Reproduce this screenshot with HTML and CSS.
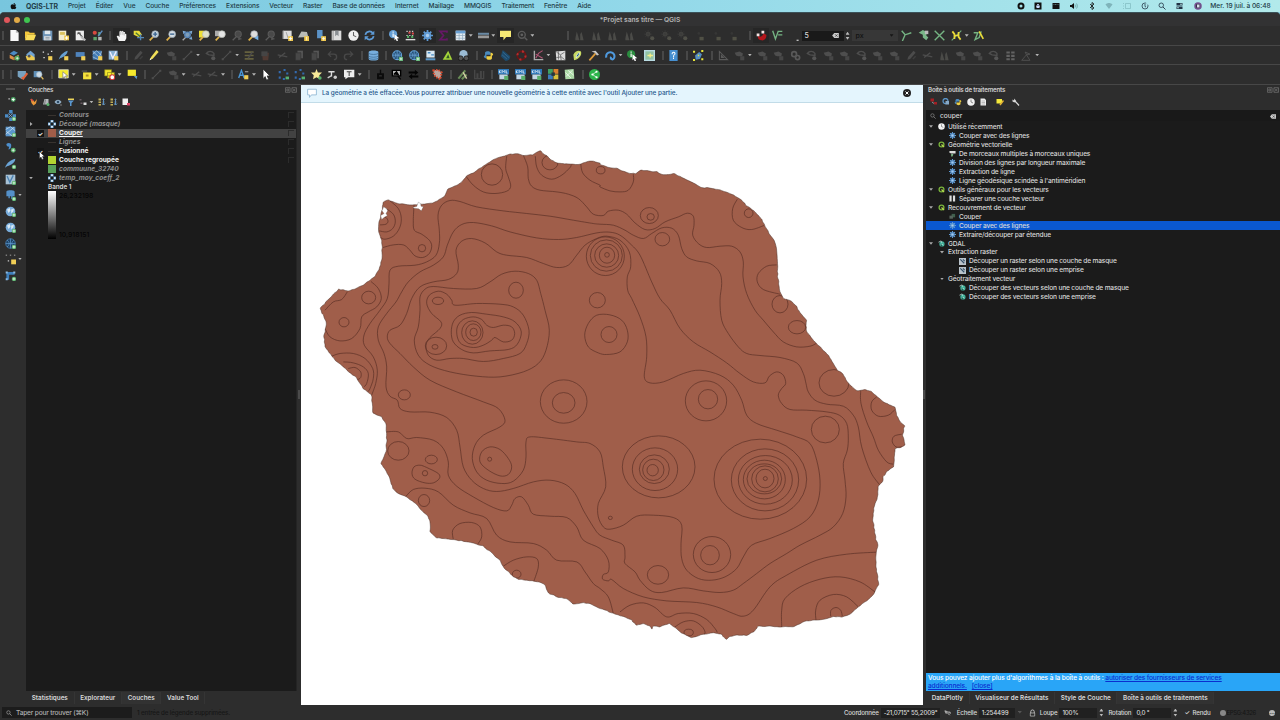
FILE: index.html
```
<!DOCTYPE html>
<html lang="fr">
  <head>
    <meta charset="UTF-8" />
    <title>*Projet sans titre — QGIS</title>
    <link rel="stylesheet" href="styles.css">
  </head>
  <body>
    <!-- icon sprite -->
    <svg class="sprite">
      <symbol id="apple" viewBox="0 0 16 16"><path d="M11 1c0 2-1 3-3 3 0-2 1-3 3-3zM8 5c1 0 2-1 3-1 1.500 0 2.500.8 3 1.600-2.500 1.500-2 4.500.5 5.500C13.500 14 12 15.500 11 15.500c-1 0-1.500-.5-2.700-.5s-1.800.5-2.800.5C3.500 15.500 1.500 12 1.500 9S3.500 4 5.500 4C6.500 4 7.500 5 8 5z"/></symbol>
      <symbol id="new" viewBox="0 0 16 16"><path d="M2 0h8l4 4v12H2z" fill="#f8f8f8"/><path d="M10 0v4h4" fill="#bbb"/></symbol>
      <symbol id="open" viewBox="0 0 16 16"><path d="M0 14V2h5l2 2h7v3H4z" fill="#f3c73c"/><path d="M3 7h13l-3 8H0z" fill="#f9dd5a"/></symbol>
      <symbol id="save" viewBox="0 0 16 16"><path d="M1 1h14v14H1z" fill="#6f95b8"/><path d="M4 1h8v5H4z" fill="#dfe8ee"/><path d="M3 9h10v6H3z" fill="#d9dde0"/><path d="M5 11h6M5 13h6" stroke="#7c8b98"/></symbol>
      <symbol id="layout" viewBox="0 0 16 16"><path d="M1 1h11v14H1z" fill="#f2ecd0"/><path d="M3 3h7v4H3z" fill="#d9c15c"/><path d="M9 8h7v7H9z" fill="#edc94f"/><path d="M12.500 9v5M10 11.500h5" stroke="#fff" stroke-width="1.500"/></symbol>
      <symbol id="layouts" viewBox="0 0 16 16"><path d="M1 1h12v14H1z" fill="#eee"/><path d="M4 3l7 7M3 6l4-2 2 5" stroke="#555" stroke-width="1.500" fill="none"/><path d="M9 10l6 5" stroke="#bbb" stroke-width="3"/></symbol>
      <symbol id="style" viewBox="0 0 16 16"><circle cx="4" cy="4" r="3" fill="#d84a3f"/><path d="M9 3h3v5H9zM2 10h5v5H2z" fill="#5fa46a"/><path d="M15 1L9 9" stroke="#5f91c5" stroke-width="2"/><path d="M9 10h5v5H9z" fill="#b7b7b7"/></symbol>
      <symbol id="hand" viewBox="0 0 16 16"><path d="M4 16L1 9l2-1 2 2V2l2-1 1 1 2-1 1 2 2 0v2l2 1v6l-2 4z" fill="#f4f4f4"/><path d="M7 2v5M10 2v5M12 4v4" stroke="#888" stroke-width=".7"/></symbol>
      <symbol id="pansel" viewBox="0 0 16 16"><path d="M1 1h8l4 6-5 3-7-3z" fill="#e8dc3a"/><path d="M11 6v9M6 11h10" stroke="#5688b8" stroke-width="2"/><path d="M4 4l6 5" stroke="#4f7a33" stroke-width="2"/></symbol>
      <symbol id="zin" viewBox="0 0 16 16"><path d="M1 15l5-5" stroke="#e0b34a" stroke-width="2.500"/><circle cx="9" cy="6" r="5" fill="#c9d5de" stroke="#93a3b0"/><path d="M9 3v6M6 6h6" stroke="#3b6591" stroke-width="2"/></symbol>
      <symbol id="zout" viewBox="0 0 16 16"><path d="M1 15l5-5" stroke="#e0b34a" stroke-width="2.500"/><circle cx="9" cy="6" r="5" fill="#d5dde3" stroke="#93a3b0"/><path d="M6 6h6" stroke="#3b6591" stroke-width="2"/></symbol>
      <symbol id="zfull" viewBox="0 0 16 16"><path d="M1 1l5 1-4 4zM15 1l-5 1 4 4zM15 14l-5-1 4-4z" fill="#7da9d3"/><path d="M1 15l5-5" stroke="#aaa" stroke-width="2"/><circle cx="8" cy="7" r="4" fill="#7e9db8" stroke="#5482b5" stroke-width="2"/></symbol>
      <symbol id="zsel" viewBox="0 0 16 16"><path d="M0 1h8v10H0z" fill="#eedf35"/><path d="M1 15l5-5" stroke="#e0b34a" stroke-width="2.500"/><circle cx="10" cy="6" r="5" fill="#dfe0c9" stroke="#b5b9b0"/></symbol>
      <symbol id="zlay" viewBox="0 0 16 16"><path d="M0 1h7v8H0z" fill="#aaa"/><path d="M1 15l5-5" stroke="#e0b34a" stroke-width="2.500"/><circle cx="10" cy="6" r="5" fill="#e5e5e5" stroke="#b5b9b0"/></symbol>
      <symbol id="zlast" viewBox="0 0 16 16"><path d="M1 15l5-5" stroke="#e0b34a" stroke-width="2.500"/><circle cx="9" cy="6" r="5" fill="#ddd" stroke="#a5a9b0"/><path d="M15 8v7l-6-3.500z" fill="#75b0e5"/></symbol>
      <symbol id="dzoom" viewBox="0 0 16 16"><path d="M1 15l5-5" stroke="#5c5c5c" stroke-width="2"/><circle cx="9" cy="6" r="4.500" fill="#494949" stroke="#5a5a5a" stroke-width="1.500"/><path d="M9 10l6 3-6 2z" fill="#555"/></symbol>
      <symbol id="mapnew" viewBox="0 0 16 16"><path d="M1 1h13v12H1z" fill="#ddd"/><path d="M2 1v12M6 3l3 9" stroke="#888"/><path d="M9 9h7v7H9z" fill="#f0c84c"/><path d="M12.500 10v5M10 12.500h5" stroke="#fff" stroke-width="1.300"/></symbol>
      <symbol id="map3d" viewBox="0 0 16 16"><path d="M0 11L5 2l8 1 2 7z" fill="#b9bbb6"/><path d="M9 9h7v7H9z" fill="#f0c84c"/><path d="M12.500 10v5" stroke="#fff"/></symbol>
      <symbol id="bmadd" viewBox="0 0 16 16"><path d="M3 0h8v12H3z" fill="#5b92c6"/><path d="M9 9h7v7H9z" fill="#f0c84c"/><path d="M12.500 10v5M10 12.500h5" stroke="#fff"/></symbol>
      <symbol id="bm" viewBox="0 0 16 16"><path d="M1 1h14v14H1z" fill="#ddd"/><path d="M6 1h5v8L8.500 7 6 9z" fill="#8a8f93"/><path d="M3 1v14" stroke="#777"/></symbol>
      <symbol id="clock" viewBox="0 0 16 16"><circle cx="8" cy="8" r="7.500" fill="#f2f2f2"/><path d="M8 3v5l4 2" fill="none" stroke="#666" stroke-width="1.500"/></symbol>
      <symbol id="refresh" viewBox="0 0 16 16"><path d="M2 7a6 6 0 0 1 11-2M14 9a6 6 0 0 1-11 2" fill="none" stroke="#5d9ad5" stroke-width="2.500"/><path d="M15 1v6H9zM1 15V9h6z" fill="#5d9ad5"/></symbol>
      <symbol id="info" viewBox="0 0 16 16"><circle cx="6" cy="6" r="6" fill="#659fd5"/><path d="M6 5v5M6 2v2" stroke="#fff" stroke-width="1.700"/><path d="M8 6l7 6-3 0 1 4-2 0-1-3-2 2z" fill="#fff"/></symbol>
      <symbol id="infog" viewBox="0 0 16 16"><circle cx="6" cy="6" r="6" fill="#2a8c3f"/><path d="M6 5v5M6 2v2" stroke="#fff" stroke-width="1.700"/><path d="M8 6l7 6-3 0 1 4-2 0-1-3-2 2z" fill="#fff"/></symbol>
      <symbol id="stats" viewBox="0 0 16 16"><path d="M1 14h14" stroke="#ddd" stroke-width="2"/><path d="M2 2h12M2 8h12" stroke="#c9c9c9" stroke-width="1.500" stroke-dasharray="2 2"/><path d="M5 4h3M10 5h3" stroke="#d64848" stroke-width="3"/><path d="M3 10h3M9 10h3" stroke="#50ad60" stroke-width="3"/></symbol>
      <symbol id="gear" viewBox="0 0 16 16"><path d="M8 0v3M8 13v3M0 8h3M13 8h3M2.500 2.500l2 2M11.500 11.500l2 2M13.500 2.500l-2 2M4.500 11.500l-2 2" stroke="#5f9ad4" stroke-width="2.500"/><circle cx="8" cy="8" r="4" fill="#a9caea" stroke="#5f9ad4" stroke-width="3"/></symbol>
      <symbol id="sigma" viewBox="0 0 16 16"><path d="M13 4V2H3l5 6-5 6h10v-2" fill="none" stroke="#661866" stroke-width="2.500"/></symbol>
      <symbol id="table" viewBox="0 0 16 16"><path d="M1 1h14v14H1z" fill="#e4ecf2"/><path d="M1 1h14v4H1z" fill="#6aa0d2"/><path d="M1 8h14M1 12h14M6 5v10M11 5v10" stroke="#8fa9bd"/></symbol>
      <symbol id="ruler" viewBox="0 0 16 16"><path d="M0 4h16v3H0z" fill="#6a89a3"/><path d="M0 8h16v4H0z" fill="#999"/></symbol>
      <symbol id="tip" viewBox="0 0 16 16"><path d="M0 1h16v9H9l-4 5v-5H0z" fill="#f7ea74"/></symbol>
      <symbol id="dmag" viewBox="0 0 16 16"><circle cx="7" cy="7" r="5" fill="none" stroke="#5a5a5a" stroke-width="2"/><circle cx="7" cy="7" r="2" fill="#606060"/><path d="M11 11l4 4" stroke="#5a5a5a" stroke-width="2"/></symbol>
      <symbol id="dhist" viewBox="0 0 16 16"><path d="M2 15V12L4 2l3 10 1 3zM9 15V6l2-3 3 12z" fill="#4b4b48"/></symbol>
      <symbol id="dsun" viewBox="0 0 16 16"><circle cx="6" cy="6" r="3.500" fill="#444440"/><path d="M6 0v12M0 6h12M2 2l8 8M10 2l-8 8" stroke="#3c3c3a"/><circle cx="12" cy="12" r="3" fill="#505048"/></symbol>
      <symbol id="ddot" viewBox="0 0 16 16"><path d="M8 10h6v5H8z" fill="#505045"/><circle cx="7" cy="5" r="2" fill="#363635"/></symbol>
      <symbol id="dline" viewBox="0 0 16 16"><path d="M2 14L14 2" stroke="#505050" stroke-width="1.500"/><path d="M1 12h3v3H1zM12 1h3v3h-3z" fill="#4c4c4c"/></symbol>
      <symbol id="dpen" viewBox="0 0 16 16"><path d="M2 14L3 10 11 1l3 3-8 9z" fill="#4b4b4b"/><path d="M10 13l4-4" stroke="#3f3f3f" stroke-width="2"/></symbol>
      <symbol id="pen" viewBox="0 0 16 16"><path d="M1 15L3 10 11 0l3 3-8 9z" fill="#f1df58"/><path d="M1 15l1-3 2 1z" fill="#fff"/></symbol>
      <symbol id="dpoly" viewBox="0 0 16 16"><path d="M1 4l7-2 5 3-1 4H6l-3-1z" fill="#4e4e4e"/><path d="M9 9h6v6H9z" fill="#464646"/></symbol>
      <symbol id="dpoly2" viewBox="0 0 16 16"><path d="M2 5c3-4 8-4 11 0v3L6 7z" fill="none" stroke="#4e4e4e" stroke-width="2"/><circle cx="12" cy="12" r="3" fill="#555"/></symbol>
      <symbol id="dcopy" viewBox="0 0 16 16"><path d="M5 1h8v11H5z" fill="#565656"/><path d="M2 4h8v11H2z" fill="#484848" stroke="#333"/></symbol>
      <symbol id="dcut" viewBox="0 0 16 16"><path d="M1 7l14 3M3 11l9-7" stroke="#4c4c4c" stroke-width="2"/></symbol>
      <symbol id="dgrid" viewBox="0 0 16 16"><path d="M2 2h5v3H2zM9 2h5v3H9zM2 7h5v3H2zM9 7h5v3H9zM2 12h5v3H2zM9 12h5v3H9z" fill="#626262"/></symbol>
      <symbol id="drot" viewBox="0 0 16 16"><path d="M1 15h12L8 7zM6 3l7 3-5 1z" fill="none" stroke="#555" stroke-width="1.200"/></symbol>
      <symbol id="dtri" viewBox="0 0 16 16"><path d="M2 2v12h12zM5 8v3h3z" fill="none" stroke="#5a5a5a" stroke-width="1.500"/></symbol>
      <symbol id="dgears" viewBox="0 0 16 16"><circle cx="6" cy="6" r="3.500" fill="none" stroke="#595959" stroke-width="2.500"/><circle cx="11" cy="11" r="3" fill="none" stroke="#595959" stroke-width="2.500"/></symbol>
      <symbol id="dtab" viewBox="0 0 16 16"><path d="M1 3h13M1 8h13M1 13h13" stroke="#65613f" stroke-width="2.500"/><path d="M12 3l-6 9" stroke="#4c4c4c" stroke-width="2"/></symbol>
      <symbol id="dtrash" viewBox="0 0 16 16"><path d="M3 4h10l-1 11H4z" fill="#503a33"/><path d="M2 2h9v7H2z" fill="#454545"/></symbol>
      <symbol id="undo" viewBox="0 0 16 16"><path d="M3 6h7a4 4 0 0 1 0 8M6 2L2 6l4 4" fill="none" stroke="#484848" stroke-width="2"/></symbol>
      <symbol id="redo" viewBox="0 0 16 16"><path d="M13 6H6a4 4 0 0 0 0 8M10 2l4 4-4 4" fill="none" stroke="#484848" stroke-width="2"/></symbol>
      <symbol id="magnet" viewBox="0 0 16 16"><path d="M3 8c2 3 6 2 8-3l4 2c1 5-3 9-7 8-4 0-6-3-5-7z" fill="#b3161b"/><path d="M1 5h4v4H1zM8 1h4v4H8z" fill="#f4e4e4"/></symbol>
      <symbol id="topo" viewBox="0 0 16 16"><path d="M1 1l4 12L9 2M8 2h7M9 7h6" fill="none" stroke="#75b483" stroke-width="2"/></symbol>
      <symbol id="dots" viewBox="0 0 16 16"><path d="M11 14h3v2h-3z" fill="#bbb"/></symbol>
      <symbol id="ylines" viewBox="0 0 16 16"><path d="M1 1l5 6L15 4M6 7L2 16" fill="none" stroke="#75b483" stroke-width="2"/></symbol>
      <symbol id="blob" viewBox="0 0 16 16"><path d="M1 4l6-4 6 3-1 5 3 3-3 4-5-4V7z" fill="#79b688"/><path d="M10 1h5v5h-5z" fill="#bbb"/></symbol>
      <symbol id="cross" viewBox="0 0 16 16"><path d="M1 1l14 14M15 1L1 15" stroke="#75b483" stroke-width="2"/></symbol>
      <symbol id="crossy" viewBox="0 0 16 16"><path d="M1 15L15 1" stroke="#75b483" stroke-width="1.500"/><path d="M2 2l3 4v7M14 14l-3-4V3M5 8h7" fill="none" stroke="#eadb38" stroke-width="2.500"/></symbol>
      <symbol id="wave" viewBox="0 0 16 16"><path d="M1 4l6 0-4 10 6-3 3-9" fill="none" stroke="#75b483" stroke-width="2"/><path d="M9 2l6 11" stroke="#eadb38" stroke-width="2.500"/></symbol>
      <symbol id="dsm" viewBox="0 0 16 16"><path d="M1 5l6-4 6 3-6 4z" fill="#4d8bc4"/><path d="M1 7l6 3v5l-6-3z" fill="#dd9149"/><path d="M8 10l6-3v5l-6 3z" fill="#e5bf54"/><circle cx="12" cy="12" r="3.500" fill="#4da75b"/><path d="M12 10v4M10 12h4" stroke="#fff"/></symbol>
      <symbol id="gpkg" viewBox="0 0 16 16"><path d="M2 6l6-5 6 5v8H3z" fill="#71a3d2"/><path d="M1 9l7-2 6 4v4H3z" fill="#ecc94f"/><circle cx="6" cy="9" r="2" fill="#555"/></symbol>
      <symbol id="pts" viewBox="0 0 16 16"><path d="M1 2h2v2H1zM8 5h2v2H8zM13 1h2v2h-2zM2 10h2v2H2z" fill="#ddd"/><path d="M9 9h6v6H9z" fill="#f0ce56"/></symbol>
      <symbol id="feather" viewBox="0 0 16 16"><path d="M1 14C3 7 8 3 14 1c0 5-5 9-11 11z" fill="#669fd2"/><path d="M9 9h6v6H9z" fill="#f0ce56"/></symbol>
      <symbol id="scratch" viewBox="0 0 16 16"><path d="M1 3h13v7H1z" fill="#4f83bb"/><path d="M9 9h6v6H9z" fill="#f0ce56"/></symbol>
      <symbol id="mesh" viewBox="0 0 16 16"><path d="M1 1h13v13H1z" fill="#427ab2"/><path d="M1 6l6-5 7 7M1 10l8 4 5-12M1 2l10 9" stroke="#bcd5eb" fill="none"/><path d="M9 9h6v6H9z" fill="#f0ce56"/></symbol>
      <symbol id="virt" viewBox="0 0 16 16"><path d="M1 1h13v13H1z" fill="#8ab2d6"/><path d="M3 3l4 9 5-10" stroke="#eef" stroke-width="2" fill="none"/><path d="M9 9h6v6H9z" fill="#f0ce56"/></symbol>
      <symbol id="db" viewBox="0 0 16 16"><path d="M1 3c0-3 14-3 14 0v10c0 3-14 3-14 0z" fill="#77aede"/><path d="M1 5c3 2 11 2 14 0M1 9c3 2 11 2 14 0M1 12c3 2 11 2 14 0" fill="none" stroke="#39668e"/></symbol>
      <symbol id="globe" viewBox="0 0 16 16"><circle cx="7.500" cy="7.500" r="6.500" fill="#244f76" stroke="#609fd4" stroke-width="1.500"/><path d="M1 7.500h13M7.500 1v13M3 3c3 3 3 6 0 9M12 3c-3 3-3 6 0 9" stroke="#73aee0" fill="none"/><path d="M10 10h6v6h-6z" fill="#61b576"/><path d="M13 11v4M11 13h4" stroke="#fff"/></symbol>
      <symbol id="osm" viewBox="0 0 16 16"><path d="M2 1h12v10H2z" fill="#d9e8f3"/><path d="M4 4h4M9 7h4" stroke="#488cc5" stroke-width="2"/><path d="M1 12h14v3H1z" fill="#5d98c9"/></symbol>
      <symbol id="tri" viewBox="0 0 16 16"><path d="M1 14L9 1l6 13z" fill="#a4d43a"/><path d="M6 12l3-6 2 6z" fill="#315a26"/></symbol>
      <symbol id="binoc" viewBox="0 0 16 16"><circle cx="8" cy="6" r="6" fill="#9bbbd4"/><circle cx="4" cy="12" r="3.500" fill="#555" stroke="#111"/><circle cx="12" cy="12" r="3.500" fill="#555" stroke="#111"/></symbol>
      <symbol id="py" viewBox="0 0 16 16"><path d="M3 8V4c0-3 8-3 8 0v3H5v5C1 12 0 8 3 8z" fill="#4b8bbe"/><path d="M13 8v4c0 3-8 3-8 0V9h6V4c4 0 5 4 2 4z" fill="#f0cf43"/></symbol>
      <symbol id="drop" viewBox="0 0 16 16"><path d="M4 0l11 9c0 4-3 7-7 7L1 9z" fill="#1d4a6b"/><path d="M4 3l9 8M3 7l7 6" stroke="#3d729b"/></symbol>
      <symbol id="ring" viewBox="0 0 16 16"><circle cx="8" cy="8" r="6" fill="none" stroke="#6e1414" stroke-width="2.500"/><circle cx="8" cy="8" r="6" fill="none" stroke="#b22d2d" stroke-width="3" stroke-dasharray="3 6.400"/></symbol>
      <symbol id="profile" viewBox="0 0 16 16"><path d="M2 1v13h13" fill="none" stroke="#ababab" stroke-width="2"/><path d="M4 12l4-7 6-4M4 6l10 6" stroke="#b45676" stroke-width="1.500" fill="none"/></symbol>
      <symbol id="grass" viewBox="0 0 16 16"><path d="M1 2l14-1v14H2z" fill="#ddd"/><path d="M2 3l6 4 1 8M8 7l6-4M2 11l7-1 5 4M5 2v12" stroke="#555" fill="none"/></symbol>
      <symbol id="leaf" viewBox="0 0 16 16"><path d="M3 15L2 7C4 1 10 0 13 2c2 5-3 11-10 13z" fill="#c9da64"/><path d="M6 11c0-4 3-7 5-7 0 3-2 6-5 7z" fill="#1c5f78" stroke="#fff"/></symbol>
      <symbol id="hammer" viewBox="0 0 16 16"><path d="M2 15L11 5" stroke="#de9c3c" stroke-width="2.500"/><path d="M5 2l6-1 5 6-3 1-3-4z" fill="#c9c9c9"/></symbol>
      <symbol id="swirl" viewBox="0 0 16 16"><path d="M2 11a6 6 0 1 1 11 1c-2 3-6 1-4-2" fill="none" stroke="#4f9ade" stroke-width="3"/></symbol>
      <symbol id="pic" viewBox="0 0 16 16"><path d="M0 0h16v16H0z" fill="#b9dbe3"/><path d="M2 2h12v12H2z" fill="#93c3a4"/><path d="M5 8h8M9 5v6" stroke="#f5ee88" stroke-width="2"/></symbol>
      <symbol id="help" viewBox="0 0 16 16"><path d="M2 0h12v16H2z" fill="#468fd0"/><path d="M6 6c0-4 5-3 4 0-2 1-2 2-2 4M8 11v2" fill="none" stroke="#fff" stroke-width="1.500"/></symbol>
      <symbol id="georef" viewBox="0 0 16 16"><path d="M3 8l6-5 4 3-3 7-6 1z" fill="#538fc3"/><path d="M0 1h3v3H0zM12 0h3v3h-3zM0 13h3v3H0zM12 12h3v3h-3zM7 7h2v2H7z" fill="#e5e43b"/></symbol>
      <symbol id="wfs" viewBox="0 0 16 16"><path d="M1 3h12v8l-6 4-6-4z" fill="#78a2c0"/><path d="M7 12l2 2 6-8" fill="none" stroke="#e0623b" stroke-width="3"/></symbol>
      <symbol id="msearch" viewBox="0 0 16 16"><path d="M1 3h11v9H1z" fill="#5f8fb8"/><circle cx="9" cy="8" r="4" fill="#cfdce6" stroke="#a2b8c9"/><path d="M12 11l3 4" stroke="#dbb55a" stroke-width="2"/></symbol>
      <symbol id="selrect" viewBox="0 0 16 16"><path d="M1 1h14v12H1z" fill="#f5eb2d" stroke="#ddd"/><path d="M7 4l7 6-3 0 1 4-2 0-1-3-2 2z" fill="#fff" stroke="#777"/></symbol>
      <symbol id="selval" viewBox="0 0 16 16"><path d="M3 5h12v10H3z" fill="#f5e13c"/><path d="M7 8h4v3H7z" fill="#a98c26"/><path d="M1 3h8" stroke="#777"/></symbol>
      <symbol id="desel" viewBox="0 0 16 16"><path d="M1 1h10v9H1zM5 5h10v8H5z" fill="#f5e92d" stroke="#86811f"/><circle cx="12" cy="12" r="3.500" fill="#fff" stroke="#d33333" stroke-width="1.500"/></symbol>
      <symbol id="selloc" viewBox="0 0 16 16"><path d="M1 1h12v9H1z" fill="#f5e92d"/><path d="M10 10l4 5 1-5z" fill="#5b99cc"/></symbol>
      <symbol id="label" viewBox="0 0 16 16"><path d="M1 13L5 2l4 11M3 9h5" fill="none" stroke="#4a96d5" stroke-width="2"/><path d="M9 9h6v6H9z" fill="#f0ce56"/><path d="M10 4h5" stroke="#aaa" stroke-width="1.500"/></symbol>
      <symbol id="cursor" viewBox="0 0 16 16"><path d="M3 0l10 10-4 0 2 5-3 1-2-5-3 3z" fill="#fff" stroke="#222"/></symbol>
      <symbol id="dotsb" viewBox="0 0 16 16"><path d="M1 3h3v3H1zM8 0h3v3H8zM12 5h3v3h-3zM1 11h3v3H1zM7 13h3v3H7z" fill="#336aae"/><path d="M11 11h5v4h-5z" fill="#56b173"/></symbol>
      <symbol id="star" viewBox="0 0 16 16"><path d="M8 0l2 5 6 0-4 4 1 6-5-3-5 3 1-6-4-4 6 0z" fill="#f8e998"/><circle cx="13" cy="13" r="2.500" fill="#59b36c"/></symbol>
      <symbol id="tstar" viewBox="0 0 16 16"><path d="M2 4h9M6.500 4v7" stroke="#ddd" stroke-width="2"/><path d="M1 13l5-3" stroke="#ccc" stroke-width="2"/><circle cx="12" cy="12" r="2.500" fill="#ccc"/></symbol>
      <symbol id="tbox" viewBox="0 0 16 16"><path d="M0 1h15v11H6l-4 3v-3H0z" fill="#eee"/><path d="M4 4h7M7.500 4v6" stroke="#444" stroke-width="1.500"/></symbol>
      <symbol id="blk1" viewBox="0 0 16 16"><path d="M3 6h10v9H3zM7 1h2v6H7z" fill="#0b0b0b"/><path d="M6 10h4" stroke="#555"/></symbol>
      <symbol id="blk2" viewBox="0 0 16 16"><path d="M2 2h12v8H2z" fill="#bbb" stroke="#000" stroke-width="2"/><path d="M4 8l4-4 3 5M10 10l4 5" stroke="#000" stroke-width="2"/></symbol>
      <symbol id="blk3" viewBox="0 0 16 16"><path d="M1 5h10M15 11H5" stroke="#050505" stroke-width="3"/><path d="M10 1l5 4-5 4zM6 7l-5 4 5 4z" fill="#050505"/></symbol>
      <symbol id="redpoly" viewBox="0 0 16 16"><path d="M2 2l7-1 5 4-1 5-1 5-4-2-5-4z" fill="#b9a69f"/><path d="M2 2l7-1 5 4-1 5-1 5-4-2-5-4z" fill="none" stroke="#d9482c" stroke-width="3" stroke-dasharray="2 2"/></symbol>
      <symbol id="brush" viewBox="0 0 16 16"><path d="M2 14L12 2M7 15l7-7" stroke="#698c57" stroke-width="3"/><path d="M9 5l5 9" stroke="#d6d2a8" stroke-width="2"/></symbol>
      <symbol id="dbar" viewBox="0 0 16 16"><path d="M1 1v13h13V3" fill="none" stroke="#464646" stroke-width="2"/><path d="M5 13V6M10 13V3" stroke="#464646" stroke-width="3"/></symbol>
      <symbol id="kml" viewBox="0 0 16 16"><path d="M0 0h16v8H0z" fill="#2c76b7"/><path d="M2 8h12v7H2z" fill="#c5d7e5"/><path d="M2 2v4M2 4l2-2M2 4l2 2M6 6V2l2 2 2-2v4M12 2v4h2" fill="none" stroke="#fff"/><path d="M9 10h6v6H9z" fill="#5bae6b"/></symbol>
      <symbol id="tiles" viewBox="0 0 16 16"><path d="M0 0h7v7H0z" fill="#3fa163"/><path d="M8 0h7v7H8z" fill="#d9812f"/><path d="M0 8h7v7H0z" fill="#3d7ebc"/><path d="M8 8h7v7H8z" fill="#d7c23b"/><path d="M5 5h5v5H5z" fill="#26363b"/></symbol>
      <symbol id="gmap" viewBox="0 0 16 16"><path d="M1 1l13-1 1 14-13 1z" fill="#acd8a6"/><path d="M2 5l8 8M6 2l8 7M3 11l9-9" stroke="#fff"/></symbol>
      <symbol id="share" viewBox="0 0 16 16"><circle cx="8" cy="8" r="8" fill="#2eb54c"/><path d="M11 4L5 8l6 4" fill="none" stroke="#fff"/><circle cx="11" cy="4" r="1.600" fill="#fff"/><circle cx="5" cy="8" r="1.600" fill="#fff"/><circle cx="11" cy="12" r="1.600" fill="#fff"/></symbol>
      <!-- side bar and panels -->
      <symbol id="vadd" viewBox="0 0 16 16"><path d="M5 6h2v2H5z" fill="#ccc"/><circle cx="12" cy="8" r="3.500" fill="#4da765"/><path d="M12 6v4M10 8h4" stroke="#fff" stroke-width="1.500"/></symbol>
      <symbol id="padd" viewBox="0 0 16 16"><path d="M6 0h5v5H6zM0 6h5v5H0zM11 6h5v5h-5zM6 11h5v5H6z" fill="#4a8cc8"/><path d="M5 5l6 6M11 5l-6 6" stroke="#8cb9df"/><circle cx="13" cy="13" r="3.200" fill="#59b36c"/><path d="M13 11v4M11 13h4" stroke="#fff"/></symbol>
      <symbol id="rgrp" viewBox="0 0 16 16"><path d="M5 0h6v5H5zM0 5h5v6H0zM11 5h5v6h-5zM5 11h6v5H5z" fill="#6aa7dc"/><path d="M6 1h4v3H6zM1 6h3v4H1zM12 6h3v4h-3zM6 12h4v3H6z" fill="#d7e8f6"/></symbol>
      <symbol id="madd" viewBox="0 0 16 16"><path d="M1 1h14v14H1z" fill="#5b97cd"/><path d="M1 5l7-4 7 6M1 12L13 2M2 8l9 7" stroke="#d9e8f4" fill="none"/><circle cx="13" cy="13" r="3.200" fill="#59b36c"/><path d="M13 11v4M11 13h4" stroke="#fff"/></symbol>
      <symbol id="nadd" viewBox="0 0 16 16"><path d="M1 1h14v14H1z" fill="#a9c3d6"/><path d="M3 3l4 9 5-10" stroke="#4d83b3" stroke-width="2" fill="none"/><circle cx="13" cy="13" r="3.200" fill="#59b36c"/><path d="M13 11v4M11 13h4" stroke="#fff"/></symbol>
      <symbol id="cadd" viewBox="0 0 16 16"><path d="M2 3c3-3 8-1 7 3 0 3-2 4-4 5l1-4C3 7 2 5 2 3z" fill="#4d8ecb"/><circle cx="12" cy="12" r="3.500" fill="#59b36c"/><path d="M12 10v4M10 12h4" stroke="#fff"/></symbol>
      <symbol id="fadd" viewBox="0 0 16 16"><path d="M0 14C3 6 8 3 15 1c0 5-5 9-12 11z" fill="#6ba4d6"/><circle cx="13" cy="13" r="3.200" fill="#59b36c"/><path d="M13 11v4M11 13h4" stroke="#fff"/></symbol>
      <symbol id="eadd" viewBox="0 0 16 16"><path d="M2 2c2-2 10-2 12 0v7h-3v4H9V9H7v3H5V9H2z" fill="#5490c8"/><circle cx="13" cy="13" r="3.200" fill="#59b36c"/><path d="M13 11v4M11 13h4" stroke="#fff"/></symbol>
      <symbol id="wadd" viewBox="0 0 16 16"><circle cx="8" cy="8" r="7" fill="#79addb"/><path d="M3 5l4-2 1 4-3 3zM9 5l4-1-1 4-3 3z" fill="#d9eaf6"/><circle cx="13" cy="13" r="3.200" fill="#59b36c"/><path d="M13 11v4M11 13h4" stroke="#fff"/></symbol>
      <symbol id="gadd" viewBox="0 0 16 16"><circle cx="8" cy="8" r="7" fill="#1e4265" stroke="#4f8abf"/><path d="M1 8h14M8 1v14M3 3c4 3 4 7 0 10M13 3c-4 3-4 7 0 10" stroke="#5f9bd0" fill="none"/><circle cx="13" cy="13" r="3.200" fill="#59b36c"/><path d="M13 11v4M11 13h4" stroke="#fff"/></symbol>
      <symbol id="yadd" viewBox="0 0 16 16"><path d="M1 1h2v1H1zM7 1h2v1H7zM13 1h2v1h-2zM4 9h2v2H4z" fill="#ccc"/><path d="M9 8h7v7H9z" fill="#f0ce56"/></symbol>
      <symbol id="shadd" viewBox="0 0 16 16"><path d="M2 14V3h12v4H6v7z" fill="#3e7fbb"/><path d="M1 2h3v3H1zM12 2h3v3h-3zM1 12h3v3H1z" fill="#8ab9e0"/><circle cx="13" cy="13" r="3.200" fill="#59b36c"/><path d="M13 11v4M11 13h4" stroke="#fff"/></symbol>
      <symbol id="fire" viewBox="0 0 16 16"><path d="M1 2l5 2 3 4 5-6-2 9-5 4-4-5z" fill="#e8983a"/><path d="M2 2l4 4" stroke="#d84444" stroke-width="3"/></symbol>
      <symbol id="grp" viewBox="0 0 16 16"><path d="M2 13L5 2h8v11z" fill="#b5b9bc"/><path d="M7 3l-2 10" stroke="#444"/><circle cx="12" cy="13" r="3" fill="#59b36c"/></symbol>
      <symbol id="eye" viewBox="0 0 16 16"><path d="M1 8c4-6 10-6 14 0-4 6-10 6-14 0z" fill="#93afc6"/><circle cx="8" cy="8" r="2.500" fill="#2f4c66"/><path d="M13 13h2v2h-2z" fill="#ccc"/></symbol>
      <symbol id="filter" viewBox="0 0 16 16"><path d="M2 1h12v3H2z" fill="#ecd55b"/><path d="M2 5h12L9 10v6H6v-6z" fill="#5a97cf"/></symbol>
      <symbol id="legend" viewBox="0 0 16 16"><path d="M1 2h4v3H1zM3 9h4v3H3z" fill="#6a5b63"/><path d="M9 9h6v5H9z" fill="#ddd"/></symbol>
      <symbol id="tree" viewBox="0 0 16 16"><path d="M1 1h5v4H1zM1 7h5v3H1zM1 12h5v3H1z" fill="#c3b056"/><path d="M8 3h6M8 8h6M8 13h6" stroke="#888"/><path d="M11 1v13M9 11l2 3 3-3" fill="none" stroke="#5c92c0" stroke-width="2"/></symbol>
      <symbol id="rem" viewBox="0 0 16 16"><path d="M1 1h11v13H1z" fill="#f0f0f0"/><path d="M10 10h6v5h-6z" fill="#e04368"/></symbol>
      <symbol id="cubes" viewBox="0 0 16 16"><path d="M1 1h7v6H1zM8 8h6v5H8z" fill="#a32025"/><path d="M4 8l4 3" stroke="#8d9194" stroke-width="2"/></symbol>
      <symbol id="model" viewBox="0 0 16 16"><circle cx="7" cy="6" r="5" fill="none" stroke="#5a94c7" stroke-width="2.500"/><path d="M7 6h7v7H7z" fill="#87a9c7"/></symbol>
      <symbol id="doc" viewBox="0 0 16 16"><path d="M3 1h8l3 3v11H3z" fill="#eee"/><path d="M5 6h7M5 9h7M5 12h7" stroke="#888"/></symbol>
      <symbol id="note" viewBox="0 0 16 16"><path d="M1 2h11v9H1z" fill="#f3e83b"/><path d="M8 14l7-9" stroke="#e4b335" stroke-width="3"/></symbol>
      <symbol id="wrench" viewBox="0 0 16 16"><path d="M5 5l9 10" stroke="#ddd" stroke-width="2.500"/><path d="M1 3l3 2 1-4 3 5-3 3-4-2z" fill="#ddd"/></symbol>
      <symbol id="q" viewBox="0 0 16 16"><circle cx="8" cy="8" r="5.500" fill="none" stroke="#78b23a" stroke-width="3"/><path d="M8 8l6 6" stroke="#b8d84f" stroke-width="3"/></symbol>
      <symbol id="multi" viewBox="0 0 16 16"><path d="M1 2h14v6H5L1 6z" fill="#ddd"/><path d="M5 9h5l-2 6H5z" fill="#7cb888"/></symbol>
      <symbol id="split" viewBox="0 0 16 16"><path d="M1 1h5v14H1zM9 1h5v14H9z" fill="#ddd"/></symbol>
      <symbol id="clip" viewBox="0 0 16 16"><path d="M6 2h8v8H6z" fill="#3f5f4c"/><path d="M1 6h8v7H1z" fill="#56645c"/></symbol>
      <symbol id="gdal" viewBox="0 0 16 16"><circle cx="9" cy="9" r="6" fill="#3fae98"/><path d="M1 5l6-3 2 5M6 12c1-3 5-3 6 0" stroke="#d5f2ec" stroke-width="1.500" fill="none"/><path d="M6 10h3v5H6z" fill="#22564c"/></symbol>
      <symbol id="rclip" viewBox="0 0 16 16"><path d="M0 0h16v16H0z" fill="#b9c3cb"/><path d="M3 3l9 9M9 3l4 4" stroke="#33506b" stroke-width="2.500"/></symbol>
      <symbol id="mag" viewBox="0 0 16 16"><circle cx="6.500" cy="6.500" r="4.500" fill="none" stroke="currentColor" stroke-width="1.600"/><path d="M10 10l5 5" stroke="currentColor" stroke-width="1.800"/></symbol>
      <symbol id="clear" viewBox="0 0 16 12"><path d="M5 0h11v12H5L0 6z" fill="#ccc"/><path d="M7 3l6 6M13 3L7 9" stroke="#222" stroke-width="1.500"/></symbol>
      <symbol id="dock" viewBox="0 0 26 12"><path d="M1 1h10v10H1zM4 4h4v4H4zM15 1h10v10H15zM17 3l6 6M23 3l-6 6" fill="none" stroke="#777" stroke-width="1.500"/></symbol>
    </svg>

    <div class="menubar">
      <svg class="apple"><use href="#apple"/></svg>
      <b>QGIS-LTR</b><span>Projet</span><span>Éditer</span><span>Vue</span><span>Couche</span><span>Préférences</span><span>Extensions</span><span>Vecteur</span><span>Raster</span><span>Base de données</span><span>Internet</span><span>Maillage</span><span>MMQGIS</span><span>Traitement</span><span>Fenêtre</span><span>Aide</span>
      <div class="tray">
        <svg viewBox="0 0 16 16"><circle cx="8" cy="8" r="5" fill="none" stroke="#111" stroke-width="4"/></svg>
        <svg viewBox="0 0 16 16"><path d="M1 1h14v14H1z" fill="#111"/><path d="M8 4l3 5H5zM5 11h6" fill="none" stroke="#cdf" stroke-width="2"/></svg>
        <svg viewBox="0 0 16 16"><path d="M1 2h14v12H1z" fill="#111"/><path d="M3 5h10" stroke="#9cc" stroke-dasharray="2 1"/></svg>
        <svg viewBox="0 0 16 16"><path d="M0 6h3l5-4v12l-5-4H0z" fill="#111"/><path d="M10 5c1 2 1 4 0 6M13 3c2 3 2 7 0 10" fill="none" stroke="#699" stroke-width="1.500"/></svg>
        <svg viewBox="0 0 16 16"><path d="M4 4l8 8-4 3V1l4 3-8 8" fill="none" stroke="#111" stroke-width="1.600"/></svg>
        <svg viewBox="0 0 16 16"><path d="M1 5c4-4 10-4 14 0l-7 9z" fill="#7fb4ba"/></svg>
        <svg viewBox="0 0 16 16"><path d="M5 3h10v10H5zM0 3h2M0 8h2M0 13h2" fill="none" stroke="#82bcc2" stroke-width="1.500"/></svg>
        <svg viewBox="0 0 16 16"><circle cx="8" cy="8" r="6" fill="none" stroke="#234" stroke-width="1.500" stroke-dasharray="30 4"/><path d="M8 4v5l2 1" fill="none" stroke="#234" stroke-width="1.500"/></svg>
        <svg viewBox="0 0 16 16" class="dark"><use href="#mag"/></svg>
        <svg viewBox="0 0 16 16"><path d="M1 2h12v5H1zM1 9h12v5H1z" fill="#234"/><circle cx="10" cy="4.500" r="1.500" fill="#cff"/><circle cx="4" cy="11.500" r="1.500" fill="#cff"/></svg>
        <svg viewBox="0 0 16 16"><circle cx="8" cy="8" r="6" fill="#334" stroke="#74518f" stroke-width="3"/><path d="M6 5h5v6H6z" fill="#dde"/></svg>
        <span>Mer. 19 juil. à 06:48</span>
      </div>
    </div>

    <div class="window">
      <div class="titlebar"><i class="dot red"></i><i class="dot yellow"></i><i class="dot green"></i><span>*Projet sans titre — QGIS</span></div>

      <!-- "|" is a separator, "v" a drop-down arrow, "_" a blank gap, "." a small one -->
      <div class="toolbar" data-icons="| new open save layout layouts style | hand! pansel zin zout zfull zsel zlay dzoom zlast dzoom mapnew map3d bmadd bm clock refresh | info stats gear! sigma table v ruler v tip! dmag v _ | dhist dhist dhist dhist . dsun dsun dsun ddot ddot ddot . | magnet! topo dots">
        <div class="size"><span>5</span><svg><use href="#clear"/></svg></div>
        <div class="spin"></div>
        <div class="unit"><span>px</span><i class="arrow"></i></div>
      </div>
      <div class="toolbar" data-icons="| dsm gpkg pts feather scratch mesh virt | dpen pen dpoly dline v dpoly2 dline v dtab dtrash dcut dcopy dcopy undo redo | db | globe globe osm tri binoc | py drop ring profile v grass leaf hammer swirl v infog pic | help | georef | dtri dpoly v dpoly dpoly dgears dpoly2 dpoly dpoly dpoly2 dpoly dpoly dpen dcut dhist dpoly dpoly dpoly2 dgrid drot v"></div>
      <div class="toolbar third" data-icons="| | wfs msearch | selrect v selval v desel v selloc | dline dpoly v dcut dcut v | label v cursor dotsb dotsb star tstar tbox v | blk1 blk2 blk3 | redpoly | brush dbar | kml kml kml tiles gmap | share"></div>

      <div class="main">
        <div class="sidebar">
          <i class="grip"></i>
          <svg><use href="#vadd"/></svg><svg><use href="#padd"/></svg><svg><use href="#madd"/></svg><svg><use href="#cadd"/></svg><svg><use href="#fadd"/></svg><svg><use href="#nadd"/></svg>
          <div class="more"><svg><use href="#eadd"/></svg><i class="arrow"></i></div>
          <svg><use href="#wadd"/></svg><svg><use href="#wadd"/></svg><svg><use href="#gadd"/></svg>
          <div class="more"><svg><use href="#yadd"/></svg><i class="arrow"></i></div>
          <svg><use href="#shadd"/></svg>
        </div>

        <div class="dock layers">
          <div class="dock-title">Couches<svg><use href="#dock"/></svg></div>
          <div class="dock-tools" data-icons="fire grp eye filter legend v tree tree rem"></div>
          <div class="tree">
            <div class="layer off"><i class="tw"></i><i class="cb"></i><i class="line"></i><span>Contours</span><i class="ind"></i></div>
            <div class="layer off"><i class="tw closed"></i><i class="cb"></i><svg><use href="#rgrp"/></svg><span>Découpé (masque)</span><i class="ind"></i></div>
            <div class="layer current"><i class="tw"></i><i class="cb on">✓</i><i class="sw" style="background: #a05d49"></i><span>Couper</span><i class="ind"></i></div>
            <div class="layer off"><i class="tw"></i><i class="cb"></i><i class="line"></i><span>Lignes</span><i class="ind"></i></div>
            <div class="layer"><i class="tw"></i><i class="cb on">✓</i><i class="line"></i><span>Fusionné</span><i class="ind"></i></div>
            <div class="layer"><i class="tw"></i><i class="cb"></i><i class="sw" style="background: #b2d431"></i><span>Couche regroupée</span><i class="ind"></i></div>
            <div class="layer off"><i class="tw"></i><i class="cb"></i><i class="sw" style="background: #57a05b"></i><span>commuune_32740</span></div>
            <div class="layer off"><i class="tw opened"></i><i class="cb"></i><svg><use href="#rgrp"/></svg><span>temp_moy_coeff_2</span></div>
            <div class="band">Bande 1</div>
            <div class="ramp"><i></i><div><span>26,232198</span><span>10,918151</span></div></div>
            <svg class="pointer"><use href="#cursor"/></svg>
          </div>
          <div class="tabs"><span>Statistiques</span><span>Explorateur</span><span class="active">Couches</span><span>Value Tool</span></div>
        </div>

        <div class="split"></div>
        <div class="canvas">
          <div class="message">
            <svg class="bubble" viewBox="0 0 16 16"><path d="M1 2h14v9H7l-3 4v-4H1z" fill="#fff" stroke="#6b9fc4"/></svg>
            <span>La géométrie a été effacée.Vous pourrez attribuer une nouvelle géométrie à cette entité avec l'outil Ajouter une partie.</span>
            <svg class="close" viewBox="0 0 16 16"><circle cx="8" cy="8" r="8" fill="#222"/><path d="M5 5l6 6M11 5l-6 6" stroke="#fff" stroke-width="2"/></svg>
          </div>
          <svg id="map" viewBox="301 102.800 621 602"></svg>
        </div>
        <div class="split"></div>

        <div class="dock toolbox">
          <div class="dock-title">Boîte à outils de traitements<svg><use href="#dock"/></svg></div>
          <div class="dock-tools" data-icons="cubes model py clock doc . note . wrench"></div>
          <div class="search"><svg class="mag"><use href="#mag"/></svg><span>couper</span><svg class="clear"><use href="#clear"/></svg></div>
          <div class="tree">
            <div class="alg l0"><i class="tw opened"></i><svg><use href="#clock"/></svg>Utilisé récemment</div>
            <div class="alg l1"><svg><use href="#gear"/></svg>Couper avec des lignes</div>
            <div class="alg l0"><i class="tw opened"></i><svg><use href="#q"/></svg>Géométrie vectorielle</div>
            <div class="alg l1"><svg><use href="#multi"/></svg>De morceaux multiples à morceaux uniques</div>
            <div class="alg l1"><svg><use href="#gear"/></svg>Division des lignes par longueur maximale</div>
            <div class="alg l1"><svg><use href="#gear"/></svg>Extraction de ligne</div>
            <div class="alg l1"><svg><use href="#gear"/></svg>Ligne géodésique scindée à l'antiméridien</div>
            <div class="alg l0"><i class="tw opened"></i><svg><use href="#q"/></svg>Outils généraux pour les vecteurs</div>
            <div class="alg l1"><svg><use href="#split"/></svg>Séparer une couche vecteur</div>
            <div class="alg l0"><i class="tw opened"></i><svg><use href="#q"/></svg>Recouvrement de vecteur</div>
            <div class="alg l1"><svg><use href="#clip"/></svg>Couper</div>
            <div class="alg l1 selected"><svg><use href="#gear"/></svg>Couper avec des lignes</div>
            <div class="alg l1"><svg><use href="#gear"/></svg>Extraire/découper par étendue</div>
            <div class="alg l0"><i class="tw opened"></i><svg><use href="#gdal"/></svg>GDAL</div>
            <div class="alg group"><i class="tw opened"></i>Extraction raster</div>
            <div class="alg l2"><svg><use href="#rclip"/></svg>Découper un raster selon une couche de masque</div>
            <div class="alg l2"><svg><use href="#rclip"/></svg>Découper un raster selon une emprise</div>
            <div class="alg group"><i class="tw opened"></i>Géotraitement vecteur</div>
            <div class="alg l2"><svg><use href="#gdal"/></svg>Découper des vecteurs selon une couche de masque</div>
            <div class="alg l2"><svg><use href="#gdal"/></svg>Découper des vecteurs selon une emprise</div>
          </div>
          <div class="tip">Vous pouvez ajouter plus d'algorithmes à la boîte à outils : <a>autoriser des fournisseurs de services<br>additionnels.</a> &nbsp; <a>[close]</a></div>
          <div class="tabs"><span>DataPlotly</span><span>Visualiseur de Résultats</span><span>Style de Couche</span><span class="active">Boîte à outils de traitements</span></div>
        </div>
      </div>

      <div class="status">
        <div class="locator"><svg><use href="#mag"/></svg><span>Taper pour trouver (⌘K)</span></div>
        <span class="ghost">1 entrée de légende supprimées.</span>
        <div class="info">
          <span>Coordonnée</span><span class="field f-coord">-21,0715° 55,2009°</span>
          <svg class="ext" viewBox="0 0 16 16"><path d="M2 3l6 2-3 4zM7 7l6 6M9 6h5v4" fill="none" stroke="#ccc" stroke-width="2"/></svg>
          <span>Échelle</span><span class="field f-scale">1:254499</span><i class="arrow dim"></i>
          <svg class="lock" viewBox="0 0 16 16"><path d="M4 8V5a4 4 0 0 1 8 0v3" fill="none" stroke="#ccc" stroke-width="2"/><path d="M3 8h10v7H3z" fill="none" stroke="#ccc" stroke-width="1.500"/></svg>
          <span>Loupe</span><span class="field f-mag">100%</span><i class="spin"></i>
          <span class="w-rot">Rotation</span><span class="field f-rot">0,0 °</span><i class="spin"></i>
          <span class="w-render">✓&nbsp; Rendu</span>
          <i class="ball"></i><span class="ghost epsg">EPSG:4326</span><i class="ball last">…</i>
        </div>
      </div>
    </div>
    <script src="app.js"></script>
  </body>
</html>
```
FILE: styles.css
```
* {
  box-sizing: border-box;
}

body {
  margin: 0;
  width: 1280px;
  height: 720px;
  overflow: hidden;
  display: flex;
  flex-direction: column;
  background: #8fd3e4;
  color: #d8d8d8;
  font-family: Inter, "Liberation Sans", sans-serif;
  font-size: 7px;
  font-weight: 500;
  white-space: nowrap;
}

i {
  font-style: normal;
}

svg {
  display: block;
  flex: none;
}

.sprite {
  position: absolute;
  width: 0;
  height: 0;
}

/* macOS menu bar */
.menubar {
  flex: none;
  height: 12px;
  display: flex;
  align-items: center;
  gap: 10px;
  padding: 0 9.500px 0 10px;
  background: linear-gradient(90deg, #78c6de, #92d8e9 50%, #b2eaeb);
  color: #1f3d48;
  font-size: 6.600px;
  letter-spacing: -0.120px;
}
.menubar b {
  font-size: 6.900px;
  letter-spacing: -0.080px;
}
.apple {
  width: 7px;
  height: 8px;
  fill: #111;
  margin-right: -1px;
}
.tray {
  margin-left: auto;
  display: flex;
  align-items: center;
  gap: 9.700px;
}
.tray svg {
  width: 8px;
  height: 8px;
}
.tray .dark {
  color: #234;
}
.tray span {
  margin-left: -1px;
  letter-spacing: -0.060px;
}

.window {
  flex: 1;
  min-height: 0;
  display: flex;
  flex-direction: column;
  background: #2d2d2d;
  border-top: 1px solid #3b5158;
  border-radius: 4px 4px 0 0;
}
.titlebar {
  flex: none;
  height: 13px;
  display: flex;
  align-items: center;
  gap: 4px;
  padding-left: 4px;
  background: #323233;
  border-radius: 4px 4px 0 0;
}
.titlebar span {
  flex: 1;
  text-align: center;
  padding-right: 34px;
  font-weight: 600;
  font-size: 6.700px;
  color: #b5b5b5;
}
.dot {
  width: 6px;
  height: 6px;
  border-radius: 50%;
}
.red {
  background: #e0565b;
}
.yellow {
  background: #e2ab47;
}
.green {
  background: #3fc551;
}

/* toolbars, filled by app.js */
.toolbar {
  flex: none;
  height: 19.500px;
  display: flex;
  align-items: center;
  padding-top: 1px;
  border-bottom: 1px solid #474747;
}
.toolbar .sep:first-child {
  margin-left: -2px;
}
.btn {
  flex: none;
  width: 16.550px;
  height: 15px;
  display: flex;
  align-items: center;
  justify-content: center;
}
.btn svg {
  width: 11px;
  height: 11px;
}
.btn.checked {
  background: #262626;
}
.sep {
  flex: none;
  width: 8px;
  height: 9px;
  border-left: 2px solid #484848;
  position: relative;
  left: 4px;
}
.arrow {
  flex: none;
  width: 6px;
  height: 3px;
}
.third .arrow {
  width: 6.400px;
}
.arrow::before {
  content: "";
  display: block;
  width: 4px;
  height: 2.500px;
  background: #b5b5b5;
  clip-path: polygon(0 0, 100% 0, 50% 100%);
}
.gap {
  width: 27px;
}
.dotgap {
  width: 4px;
}
.size {
  width: 42px;
  height: 10px;
  margin-left: -1px;
  padding: 0 5px 0 3px;
  background: #191919;
  display: flex;
  align-items: center;
  justify-content: space-between;
}
.size svg {
  width: 7px;
  height: 5px;
}
.spin {
  width: 4px;
  height: 8px;
  margin: 0 2px;
  display: flex;
  flex-direction: column;
  justify-content: space-between;
}
.spin::before,
.spin::after {
  content: "";
  height: 3px;
  background: #bbb;
  clip-path: polygon(50% 0, 100% 100%, 0 100%);
}
.spin::after {
  clip-path: polygon(0 0, 100% 0, 50% 100%);
}
.unit {
  width: 46px;
  height: 11px;
  margin-right: 1px;
  padding: 0 2px 0 4px;
  background: #373737;
  color: #111;
  display: flex;
  align-items: center;
  justify-content: space-between;
}
.unit .arrow::before {
  background: #161616;
}

.main {
  flex: 1;
  min-height: 0;
  display: flex;
}
.sidebar {
  width: 26px;
  display: flex;
  flex-direction: column;
  align-items: center;
  padding: 3px 5px 0 0;
  gap: 5px;
}
.sidebar svg {
  width: 11px;
  height: 11px;
}
.more {
  position: relative;
}
.more .arrow {
  position: absolute;
  left: 13px;
  top: 4px;
}
.grip {
  width: 9px;
  height: 2px;
  margin-bottom: -1px;
  background: #505050;
}

.dock {
  display: flex;
  flex-direction: column;
}
.layers {
  width: 272px;
}
.toolbox {
  width: 354px;
}
.dock-title {
  height: 10px;
  display: flex;
  align-items: center;
  justify-content: space-between;
  padding: 0 1px 0 2px;
  font-size: 6.200px;
  font-weight: 600;
  letter-spacing: -0.200px;
  color: #cfcfcf;
}
.dock-title svg {
  width: 12px;
  height: 6px;
}
.dock-tools {
  height: 15.500px;
  display: flex;
  align-items: center;
  padding-left: 1.500px;
}
.dock-tools .btn {
  width: 12.400px;
}
.dock-tools .btn svg {
  width: 8px;
  height: 8px;
}
.tree {
  flex: 1;
  min-height: 0;
  background: #1b1b1b;
  position: relative;
}
.layers .tree {
  margin-right: 1px;
  border-right: 1px solid #242424;
  padding-top: 0.500px;
}

.layer {
  height: 9px;
  display: flex;
  align-items: center;
  color: #f2f2f2;
  font-weight: 700;
  padding-right: 2px;
}
.layer span {
  margin-left: 3px;
  font-size: 6.600px;
}
.layer.off span {
  color: #8e8e8e;
  font-style: italic;
}
.layer.current {
  background: #424242;
}
.layer.current span {
  text-decoration: underline;
}
.layer svg {
  width: 8px;
  height: 8px;
}
.tw {
  flex: none;
  width: 11px;
  padding-left: 3px;
}
.tw::before {
  content: "";
  display: block;
}
.tw.opened::before {
  width: 4px;
  height: 2.500px;
  background: #aaa;
  clip-path: polygon(0 0, 100% 0, 50% 100%);
}
.tw.closed::before {
  width: 2.500px;
  height: 4px;
  margin-left: 1px;
  background: #aaa;
  clip-path: polygon(0 0, 100% 50%, 0 100%);
}
.cb {
  width: 7px;
  height: 7px;
  margin-right: 4px;
  font-size: 6px;
  line-height: 7px;
  text-align: center;
}
.cb.on {
  background: #151515;
}
.sw {
  width: 8px;
  height: 8px;
}
.line {
  width: 8px;
  height: 1px;
  background: #38332f;
}
.ind {
  width: 6px;
  height: 6px;
  margin-left: auto;
  border: 1px solid #2c2c2c;
  border-right: 0;
  border-bottom: 0;
}
.band {
  height: 8px;
  padding-left: 22px;
  line-height: 8px;
  font-weight: 600;
  font-size: 6.300px;
}
.ramp {
  display: flex;
  padding-left: 22px;
  height: 48px;
}
.ramp i {
  width: 8px;
  background: linear-gradient(#fff, #000);
}
.ramp div {
  display: flex;
  flex-direction: column;
  justify-content: space-between;
  padding-left: 3px;
  font-size: 6.800px;
  color: #050505;
}
.pointer {
  position: absolute;
  left: 12px;
  top: 41px;
  width: 8px;
  height: 9px;
}

.tabs {
  flex: none;
  height: 14.500px;
  display: flex;
  align-items: center;
  padding-top: 1px;
  font-size: 6.300px;
  font-weight: 600;
}
.tabs span {
  height: 12px;
  line-height: 12px;
  padding: 0 5.700px;
  border-right: 1px solid #353535;
}
.tabs .active {
  background: #323232;
}

.split {
  width: 3px;
  display: flex;
  align-items: center;
}
.split::before {
  content: "";
  width: 2px;
  height: 9px;
  background: #4b4b4b;
}

/* map canvas */
.canvas {
  flex: 1;
  background: #fff;
}
.message {
  height: 18px;
  display: flex;
  align-items: center;
  padding: 0 12px 0 6px;
  background: #e4f5fd;
  border-bottom: 1px solid #c2dce8;
  color: #24558c;
  font-size: 6.400px;
  letter-spacing: -0.035px;
}
.bubble {
  width: 10px;
  height: 10px;
  margin-right: 5px;
}
.close {
  width: 8px;
  height: 8px;
  margin-left: auto;
}
#map {
  width: 621px;
  height: 602px;
}
.land {
  fill: #a05e4a;
  stroke: #4a3029;
  stroke-width: 0.500;
}
.iso {
  fill: none;
  stroke: #5c3126;
  stroke-width: 0.700;
}
.hole {
  fill: #fff;
  stroke: #555;
  stroke-width: 0.300;
}

.search {
  height: 11px;
  display: flex;
  align-items: center;
  padding: 1px 4px 0 4px;
  background: #191919;
  font-size: 6.600px;
}
.search .mag {
  width: 6px;
  height: 6px;
  margin-right: 4px;
  color: #999;
}
.search .clear {
  width: 6px;
  height: 5px;
  margin-left: auto;
}
.toolbox .tree {
  padding-top: 1px;
}
.alg {
  height: 9px;
  display: flex;
  align-items: center;
  font-size: 6.600px;
  letter-spacing: -0.160px;
}
.alg svg {
  width: 7px;
  height: 7px;
  margin: 0 3.500px 0 0.500px;
}
.l1 {
  padding-left: 22px;
}
.l2 {
  padding-left: 32px;
}
.group {
  height: 8.500px;
  padding-left: 11px;
}
.selected {
  background: #0a58d0;
}
.tip {
  height: 18px;
  padding: 1px 2px;
  line-height: 8px;
  background: #29a5f7;
  color: #fff;
  font-size: 6.600px;
  letter-spacing: -0.120px;
}
.tip a {
  color: #0a2fd0;
  text-decoration: underline;
}

.status {
  flex: none;
  height: 15px;
  display: flex;
  align-items: center;
  font-size: 6.200px;
  letter-spacing: -0.180px;
  padding-left: 2px;
}
.locator {
  width: 130px;
  height: 11px;
  padding-left: 4px;
  display: flex;
  align-items: center;
  background: #1c1c1c;
  color: #b0b0b0;
  font-size: 6.600px;
}
.locator svg {
  width: 6px;
  height: 6px;
  margin-right: 4px;
}
.ghost {
  margin-left: 5px;
  color: #161616;
  letter-spacing: -0.100px;
}
.info {
  margin-left: auto;
  display: flex;
  align-items: center;
}
.field {
  height: 10px;
  line-height: 10px;
  padding-left: 3px;
  background: #202020;
  margin-left: 2px;
}
.f-coord {
  width: 59px;
}
.f-scale {
  width: 36px;
}
.f-mag {
  width: 38px;
}
.f-rot {
  width: 38px;
}
.ext,
.lock {
  width: 7px;
  height: 8px;
}
.ext {
  margin: 0 6px 0 4px;
}
.lock {
  margin: 0 4px 0 5px;
}
.dim {
  margin-left: 3px;
  opacity: 0.3;
}
.w-rot {
  margin-left: 3px;
}
.w-render {
  margin: 0 9px 0 5px;
}
.ball {
  width: 6px;
  height: 6px;
  border-radius: 50%;
  background: #888;
}
.ball.last {
  margin: 0 5px 0 13px;
  background: #bbb;
  color: #222;
  line-height: 3px;
  text-align: center;
}
.epsg {
  margin-left: 1px;
  font-size: 5.800px;
  letter-spacing: -0.250px;
}
```
FILE: app.js
```
// toolbars
document.querySelectorAll("[data-icons]").forEach((bar) => {
  const make = (name) => {
    if (name === "|") return '<i class="sep"></i>';
    if (name === "v") return '<i class="arrow"></i>';
    if (name === "_") return '<i class="gap"></i>';
    if (name === ".") return '<i class="dotgap"></i>';
    const on = name.endsWith("!");
    const id = name.replace("!", "");
    return `<span class="btn${on ? " checked" : ""}"><svg><use href="#${id}"/></svg></span>`;
  };
  bar.insertAdjacentHTML(
    "afterbegin",
    bar.dataset.icons.split(" ").map(make).join("")
  );
});
document
  .querySelector(".toolbar")
  .insertAdjacentHTML(
    "beforeend",
    ["ylines", "blob", "cross", "crossy", "v", "wave"]
      .map((n) =>
        n === "v"
          ? '<i class="arrow"></i>'
          : `<span class="btn"><svg><use href="#${n}"/></svg></span>`
      )
      .join("")
  );

// the island is digitised on four sheets, three units per pixel
const sheets = { A: [310, 140], B: [600, 140], C: [310, 380], D: [600, 380] };

function read(text) {
  let o = sheets.A;
  const pts = [];
  text.trim().split(/\s+/).forEach((t) => {
    if (sheets[t]) {
      o = sheets[t];
      return;
    }
    const [x, y] = t.split(",").map(Number);
    pts.push([o[0] + x / 3, o[1] + y / 3]);
  });
  return pts;
}

// Catmull-Rom spline through the points
function curve(p, closed) {
  const n = p.length;
  const at = (i) =>
    closed ? p[(i + n) % n] : p[Math.max(0, Math.min(n - 1, i))];
  let d = `M${p[0][0].toFixed(1)} ${p[0][1].toFixed(1)}`;
  for (let i = 0; i < (closed ? n : n - 1); i++) {
    const [a, b, c, e] = [at(i - 1), at(i), at(i + 1), at(i + 2)];
    const k = [
      b[0] + (c[0] - a[0]) / 6, b[1] + (c[1] - a[1]) / 6,
      c[0] - (e[0] - b[0]) / 6, c[1] - (e[1] - b[1]) / 6,
      c[0], c[1],
    ];
    d += "C" + k.map((v) => v.toFixed(1)).join(" ");
  }
  return d + (closed ? "Z" : "");
}

// coast: straight pieces with a little roughness
function rough(p) {
  let seed = 7;
  const rnd = () => ((seed = (seed * 16807) % 2147483647) / 2147483647 - 0.5);
  const out = [];
  p.forEach((a, i) => {
    const b = p[(i + 1) % p.length];
    const len = Math.hypot(b[0] - a[0], b[1] - a[1]);
    const steps = Math.max(1, Math.round(len / 2.5));
    for (let s = 0; s < steps; s++) {
      const t = s / steps;
      out.push([
        a[0] + (b[0] - a[0]) * t + rnd() * 0.7,
        a[1] + (b[1] - a[1]) * t + rnd() * 0.7,
      ]);
    }
  });
  return out;
}

const coast = `A 221,185 235,179 262,190 300,194 345,192 375,186 402,170 414,147 440,135 455,125 470,107 495,95
 520,78 545,60 575,50 600,42 625,40 640,45 668,44 683,34 692,33 705,43 722,58 742,69 780,72 812,72 830,64
 850,63 870,70 B 0,72 20,80 50,85 72,94 85,99 108,100 122,90 145,92 170,95 185,103 205,104 222,101 240,108
 258,118 280,128 305,142 330,143 360,150 378,155 400,165 425,180 438,195 462,212 485,238 495,258 508,280
 522,300 529,325 532,370 533,410 540,455 552,475 575,483 590,500 600,518 620,540 618,570 632,592 660,620
 685,645 700,672 712,690 728,700 742,725 758,742 772,752 795,748 815,755 832,770 850,785 868,793 885,802
 D 890,105 900,125 913,138 908,165 915,195 900,202 885,205 882,240 880,260 860,275 850,290 848,305 835,318
 832,350 822,385 818,415 823,450 828,478 834,495 828,515 828,560 836,612 822,640 800,662 770,685 745,705
 725,710 700,708 670,718 640,720 610,724 580,740 540,740 500,738 475,738 462,755 440,765 410,765 390,770
 378,778 365,762 340,758 310,762 275,772 245,758 225,742 208,730 180,740 158,738 155,746 150,738 130,730
 108,735 95,720 70,708 45,702 20,692 0,685 C 845,672 820,668 790,672 770,655 745,652 715,638 705,615
 690,605 650,600 625,597 605,585 580,560 570,540 545,518 520,498 485,487 430,478 380,472 360,455 362,435
 355,408 335,392 318,372 290,350 265,340 248,325 240,295 225,265 213,250 228,215 230,180 228,130 215,110
 188,98 185,45 160,25 A 138,712 112,690 75,660 45,620 42,590 50,550 40,525 30,505 48,485 85,448 120,452
 160,435 195,408 210,380 217,345 215,300 205,275 207,250 215,215`;

const open = [
  "A 215,228 228,232 234,243 228,252 210,254",
  "A 228,205 250,222 256,245 248,265 230,275 207,272",
  "A 240,182 265,205 274,235 268,265 250,288 225,297 212,292",
  "A 312,195 310,240 313,270 335,282 358,300 365,318 358,340 338,352 315,347 298,328 280,314 250,314 219,322",
  "A 468,108 490,135 520,155 555,160 590,153 602,138 595,110 587,85 590,48",
  "A 640,45 653,80 655,115 665,138 690,150 740,155 775,162 805,175 830,200 850,222 880,226 B 25,213 55,210 80,222 105,248 135,268 165,265 195,245 235,230 262,219 280,228 282,255 278,285 295,310 320,322 360,318 395,318 420,335 430,365 429,410 440,460 465,510 490,540 520,575 550,605 590,620 630,618 648,610",
  "A 676,48 680,80 695,105 725,117 755,105 780,82 783,73",
  "A 812,70 818,98 840,120 870,135 B 0,140 30,152 60,155 85,150 100,125 100,102",
  "A 185,765 197,730 202,690 190,650 163,615 162,585 180,550 210,510 232,475 237,430 240,390 265,378 315,375 350,365 378,345 388,310 388,270 384,225 395,195 420,181 450,184 500,200 580,212 650,220 720,228 790,240 850,250 B 0,252 40,255 75,270 100,285 130,295 155,280 185,263 215,264 235,285 245,325 260,350 290,362 330,370 358,395 365,430 360,480 365,540 385,580 415,620 440,640 480,646 540,652 590,668 610,700 D 618,10 625,35 645,60 680,72 730,78 760,105 775,140 785,200 812,275 840,315",
  "A 60,650 90,640 130,640 165,655 188,685 190,715 180,745 173,755",
  "A 100,665 130,668 160,680 175,700 170,730 162,740",
  "A 115,685 135,682 152,695 152,712 140,720",
  "A 45,510 70,485 95,478 112,455",
  "A 45,565 60,590 90,602 125,595 150,565 155,530 175,515 200,500 214,475 205,445 183,424",
  "B 412,177 398,205 400,240 425,262 455,268 492,256",
  "B 530,374 500,378 475,400 472,425 490,448 540,462",
  "D 782,30 783,70 800,125 820,170 835,210 860,245 880,252",
  "D 830,50 815,65 815,90 835,108 865,105 885,88",
  "D 905,162 882,168 877,185 888,200 905,200",
  "C 228,155 265,155 290,175 320,172 370,180 400,205 415,245 415,285 440,318 490,350 550,382 590,392 605,375 615,355 635,350 655,375 670,402 720,408 770,412 800,440 820,480 870,505 895,540 895,575 880,583 878,597 895,602 D 35,598 70,625 130,650 200,662 290,667 350,680 400,700 430,708 460,690 510,620 560,585 650,540 740,522 828,516",
  "C 288,348 310,328 345,324 385,335 430,375 480,398 530,415 560,465 600,485 670,490 710,510 740,540 800,545 825,575 850,610 D 0,625 25,650 40,700",
  "C 430,478 428,450 450,430 485,427 510,440 515,470 503,492",
  "C 580,558 610,540 650,530 680,535 685,560 672,602",
  "D 60,695 90,675 130,668 165,682 200,710 235,700 280,700 320,718 345,745 352,757",
  "D 225,740 250,725 280,722 305,738 315,755 312,762",
  "D 545,740 545,690 555,655 600,620 660,597 720,590 780,605 825,635",
  "D 648,720 647,690 660,660 700,643 740,650 775,680",
  "D 692,708 693,690 708,682 722,690 727,708",
];

const closed = [
  "A 860,278 800,292 745,298 680,293 600,275 545,257 490,247 455,253 430,275 412,315 400,350 370,375 330,395 295,425 275,455 258,485 230,520 205,560 205,600 222,640 230,680 228,740 240,768 C 262,60 270,85 300,95 360,96 410,112 440,150 450,200 460,260 485,300 520,325 560,334 610,325 670,305 720,300 765,312 795,340 820,390 850,440 D 0,465 35,480 70,495 75,530 75,550 105,575 120,600 150,630 185,637 250,623 310,632 360,637 400,630 430,610 470,580 510,550 560,520 600,495 660,465 700,440 728,400 738,350 735,300 730,250 742,210 745,170 740,130 718,105 680,95 620,90 570,88 545,70 535,45 545,25 B 557,730 550,705 530,695 508,708 495,728 460,725 420,700 380,668 330,635 280,605 240,565 210,510 180,475 155,425 120,345 90,310 60,285 30,276",
  "A 860,295 825,315 800,345 775,375 740,382 700,370 650,352 590,345 560,335 525,308 485,295 455,303 438,330 445,375 440,400 415,418 370,425 330,440 305,475 290,520 270,555 240,570 232,590 240,610 270,640 310,680 360,720 C 440,35 520,65 565,85 585,120 570,140 520,165 495,195 487,235 500,275 530,300 575,310 610,303 640,270 648,230 648,185 660,170 720,175 800,185 840,190 870,215 880,260 887,320 865,370 865,410 880,440 D 30,447 70,435 110,408 160,405 220,412 245,435 243,490 245,535 260,570 295,595 335,600 375,590 410,565 430,530 455,495 510,475 580,445 630,410 655,360 660,300 650,240 630,190 590,170 530,150 470,130 440,105 425,60 400,15 B 360,705 300,690 250,700 190,725 150,728 133,710 140,650 138,590 120,530 95,475 83,450 82,410 92,380 88,335 60,300 20,288",
  "A 370,439 430,445 500,445 540,425 575,402 615,393 655,400 680,420 692,460 705,510 718,570 708,630 685,670 640,695 570,710 500,708 420,695 360,675 325,645 313,600 325,560 330,510 330,470 345,447",
  "A 435,495 500,490 570,492 610,500 640,525 657,570 650,610 630,640 580,655 520,664 460,655 420,655 380,660 355,645 348,615 360,592 390,565 393,545 365,520 350,490 358,465 385,453 410,462 425,480",
  "A 430,545 450,525 485,517 530,522 580,530 615,545 634,575 622,612 595,628 540,632 490,638 455,628 430,605 424,575",
  "A 490,530 515,538 530,555 550,562 580,555 605,560 614,580 605,600 580,605 555,592 545,600 520,615 490,622 455,612 442,590 442,560 460,538",
  "A 860,525 835,550 824,585 835,620 865,638 B 20,643 60,635 82,605 82,570 65,540 30,524",
  "C 330,255 350,262 385,280 388,295 370,308 345,308 315,297 306,280 312,260",
  "C 515,215 540,200 570,208 595,235 605,260 595,283 570,287 535,270 510,245",
];

// sheet, cx, cy, rx, ry
const rings = [
  ["A", 546, 103, 32, 32], ["A", 720, 67, 24, 22], ["A", 872, 90, 13, 11],
  ["A", 336, 324, 11, 11], ["A", 618, 450, 22, 24], ["A", 384, 482, 17, 11],
  ["A", 862, 480, 24, 23], ["A", 176, 472, 21, 19], ["A", 102, 546, 15, 14],
  ["A", 375, 620, 9, 7], ["A", 378, 617, 32, 26], ["A", 491, 576, 11, 12],
  ["A", 490, 576, 23, 25], ["A", 487, 577, 32, 35], ["A", 283, 764, 18, 15],
  ["B", 21, 344, 7, 7], ["B", 21, 345, 23, 24], ["B", 20, 346, 36, 35],
  ["B", 19, 346, 48, 47], ["B", 16, 348, 57, 58], ["B", 27, 583, 24, 24],
  ["B", 152, 230, 11, 10], ["B", 148, 226, 27, 24], ["B", 187, 297, 22, 20],
  ["B", 446, 219, 13, 13], ["B", 540, 492, 24, 26], ["B", 591, 561, 26, 20],
  ["B", 702, 728, 45, 40], ["B", 324, 777, 29, 29], ["B", 318, 782, 62, 60],
  ["C", 761, 68, 34, 31], ["C", 761, 64, 70, 65], ["C", 265, 212, 32, 28],
  ["C", 364, 238, 18, 13], ["C", 342, 361, 17, 18], ["C", 345, 279, 8, 8],
  ["C", 539, 237, 6, 6], ["C", 620, 582, 13, 12],
  ["D", 676, 148, 42, 40], ["D", 158, 270, 17, 17], ["D", 160, 269, 32, 32],
  ["D", 163, 267, 45, 43], ["D", 165, 267, 68, 64], ["D", 176, 260, 109, 93],
  ["D", 496, 295, 6, 6], ["D", 495, 295, 27, 28], ["D", 495, 296, 40, 39],
  ["D", 493, 296, 52, 45], ["D", 493, 298, 63, 58], ["D", 496, 299, 81, 73],
  ["D", 495, 299, 101, 93], ["D", 481, 297, 139, 120],
  ["D", 330, 525, 28, 29], ["D", 336, 523, 56, 54], ["D", 174, 584, 32, 28],
  ["D", 31, 413, 6, 5], ["D", 266, 757, 14, 10],
];

// gaps left by the removed pieces
const holes = [
  "A 309,201 320,199 325,186 332,190 333,198 340,200 334,212 326,206 312,204",
  "A 221,200 230,206 233,212 228,220 232,226 222,232 215,238 212,226 222,220 216,212",
];

const path = (cls, d) => `<path class="${cls}" d="${d}"/>`;
const land = curve(rough(read(coast)), true);
document.getElementById("map").innerHTML =
  `<clipPath id="shore"><path d="${land}"/></clipPath>` +
  path("land", land) +
  '<g clip-path="url(#shore)">' +
  open.map((t) => path("iso", curve(read(t), false))).join("") +
  closed.map((t) => path("iso", curve(read(t), true))).join("") +
  rings
    .map(([s, x, y, rx, ry]) => {
      const [ox, oy] = sheets[s];
      return `<ellipse class="iso" cx="${ox + x / 3}" cy="${oy + y / 3}" rx="${rx / 3}" ry="${ry / 3}"/>`;
    })
    .join("") +
  "</g>" +
  holes.map((t) => path("hole", "M" + read(t).join("L") + "Z")).join("");
```
